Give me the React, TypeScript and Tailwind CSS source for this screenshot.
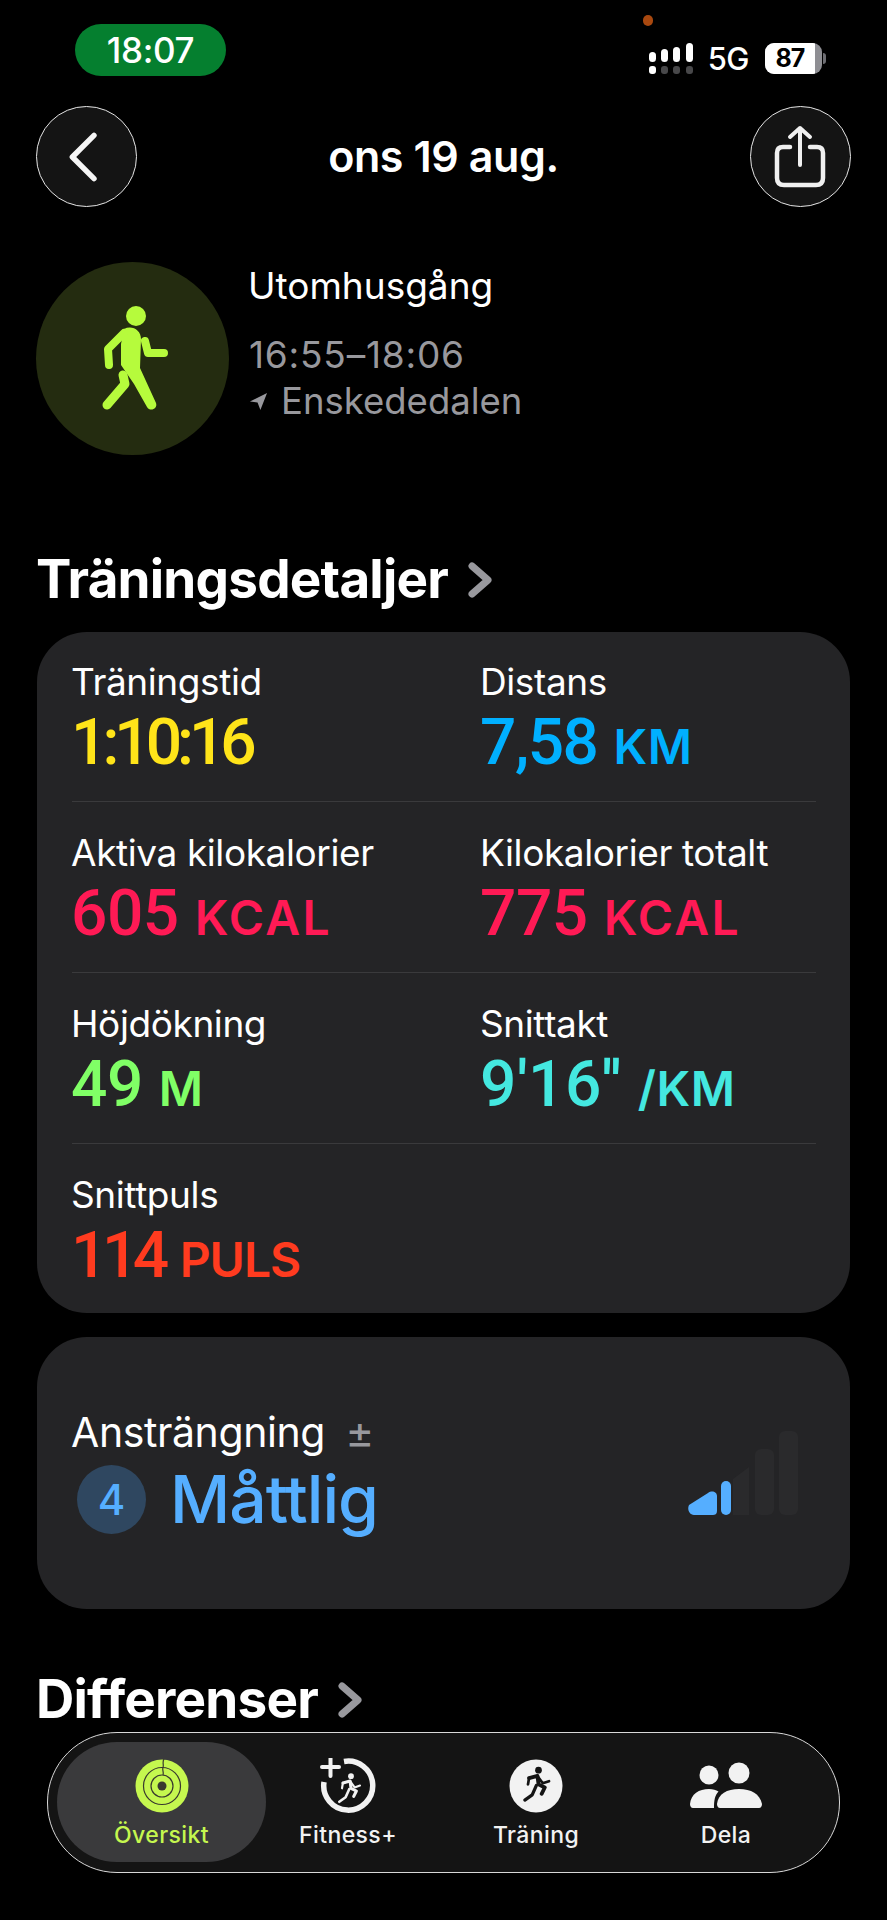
import React from 'react';

const GREEN = '#b6fb3c';

const WalkIcon = () => (
  <svg viewBox="0 0 193 193" className="w-full h-full" fill="none">
    <circle cx="100" cy="54" r="10" fill={GREEN} />
    <path d="M88 67 C96 63 105 68 105 77 L104 106 L120 141 C122 147 114 150 111 145 L98 122 L85 103 L85 82 Z" fill={GREEN} />
    <path d="M88 71 L72 87 L73 103" stroke={GREEN} strokeWidth="8" strokeLinecap="round" strokeLinejoin="round" />
    <path d="M109 79 L112 91 L128 91" stroke={GREEN} strokeWidth="8" strokeLinecap="round" strokeLinejoin="round" />
    <path d="M87 113 L89 122 L71 143" stroke={GREEN} strokeWidth="9" strokeLinecap="round" strokeLinejoin="round" />
  </svg>
);

const RunnerStrokes = ({ color, width = 3 }: { color: string; width?: number }) => (
  <>
    <circle cx="30" cy="13.5" r="3.2" fill={color} />
    <path d="M21 21 L29 19 L30 27 L36 30 L33 36" stroke={color} strokeWidth={width + 1} strokeLinecap="round" strokeLinejoin="round" fill="none" />
    <path d="M29 19 L34 26 L40 24" stroke={color} strokeWidth={width} strokeLinecap="round" strokeLinejoin="round" fill="none" />
    <path d="M21 21 L20 27" stroke={color} strokeWidth={width} strokeLinecap="round" fill="none" />
    <path d="M28 28 L24 37 L17 42" stroke={color} strokeWidth={width + 0.5} strokeLinecap="round" strokeLinejoin="round" fill="none" />
  </>
);

const RingsIcon = () => (
  <svg viewBox="0 0 54 54" className="w-[54px] h-[54px]" fill="none">
    <circle cx="27" cy="27" r="26.5" fill="#c5f74f" />
    <circle cx="27" cy="27" r="18.5" stroke="#38392f" strokeWidth="1.2" />
    <circle cx="27" cy="27" r="11" stroke="#38392f" strokeWidth="1.2" />
    <circle cx="27" cy="27" r="4.5" fill="#38392f" />
    <path d="M29 0 C27 3 29 6 28 8.5 C27 11 29 13 28 16" stroke="#38392f" strokeWidth="1.2" />
  </svg>
);

const FitnessIcon = () => (
  <svg viewBox="0 0 56 56" className="w-[56px] h-[56px]" fill="none">
    <path d="M24 3.5 A24.5 24.5 0 1 1 4 24" stroke="#f2f2f2" strokeWidth="5.5" />
    <path d="M10.5 0 V18 M2 9 H19" stroke="#f2f2f2" strokeWidth="4" strokeLinecap="round" />
    <g transform="translate(4 6) scale(0.9)">
      <RunnerStrokes color="#f2f2f2" width={2.4} />
    </g>
  </svg>
);

const TrainingIcon = () => (
  <svg viewBox="0 0 54 54" className="w-[54px] h-[54px]" fill="none">
    <circle cx="27" cy="27" r="26.5" fill="#f2f2f2" />
    <g transform="translate(-2 -3) scale(1.05)">
      <RunnerStrokes color="#141414" width={2.6} />
    </g>
  </svg>
);

const PeopleIcon = () => (
  <svg viewBox="0 0 72 48" className="w-[72px] h-[48px]" fill="#f2f2f2">
    <circle cx="19" cy="13" r="9.5" />
    <circle cx="49" cy="11" r="10.5" />
    <path d="M0 42 C1 32 9 27 19 27 C23 27 26 28 28.5 29.5 C 25 33 24 38 24 46 H3 C1 46 0 44 0 42 Z" />
    <path d="M27 42 C28 32 37 27 49 27 C61 27 70 32 72 42 C72 44 71 46 69 46 H30 C28 46 27 44 27 42 Z" />
  </svg>
);

const Chevron = () => (
  <svg viewBox="0 0 26 36" className="w-[26px] h-[36px]" fill="none">
    <path d="M5 4 L21 18 L5 32" stroke="#98989d" strokeWidth="7" strokeLinecap="round" strokeLinejoin="round" />
  </svg>
);

const SignalBars = () => {
  const heights = [10, 13, 15, 19];
  return (
    <div className="flex flex-col gap-[4px] w-[44px]">
      <div className="flex items-end justify-between h-[19px]">
        {heights.map((h, i) => (
          <span key={i} className="w-[7px] rounded-full bg-white" style={{ height: h }} />
        ))}
      </div>
      <div className="flex justify-between">
        <span className="w-[7px] h-[8px] rounded-[3px] bg-white" />
        <span className="w-[7px] h-[8px] rounded-[3px] bg-[#48484a]" />
        <span className="w-[7px] h-[8px] rounded-[3px] bg-[#48484a]" />
        <span className="w-[7px] h-[8px] rounded-[3px] bg-[#48484a]" />
      </div>
    </div>
  );
};

const Battery = () => (
  <div className="flex items-center">
    <div className="relative w-[57px] h-[31px] rounded-[9px] bg-[#8e8e93] overflow-hidden">
      <div className="h-full w-[50px] bg-white flex items-center justify-center">
        <span className="text-[25px] leading-none font-bold text-black tracking-[-1px]">87</span>
      </div>
    </div>
    <span className="ml-[1px] w-[3px] h-[11px] rounded-r-full bg-[#6e6e73]" />
  </div>
);

type Metric = { label: string; value: string; unit?: string; color: string; valueTrack?: string; unitTrack?: string };

const rows: Metric[][] = [
  [
    { label: 'Träningstid', value: '1:10:16', color: 'text-[#ffe419]', valueTrack: 'tracking-[-5px]' },
    { label: 'Distans', value: '7,58', unit: 'KM', color: 'text-[#00b0ff]', valueTrack: 'tracking-[-1.5px]' },
  ],
  [
    { label: 'Aktiva kilokalorier', value: '605', unit: 'KCAL', color: 'text-[#ff1a55]', unitTrack: 'tracking-[2.3px]' },
    { label: 'Kilokalorier totalt', value: '775', unit: 'KCAL', color: 'text-[#ff1a55]', unitTrack: 'tracking-[2.3px]' },
  ],
  [
    { label: 'Höjdökning', value: '49', unit: 'M', color: 'text-[#80ff66]' },
    { label: 'Snittakt', value: "9'16''", unit: '/KM', color: 'text-[#44e8e0]', valueTrack: 'tracking-[0.5px]' },
  ],
  [{ label: 'Snittpuls', value: '114', unit: 'PULS', color: 'text-[#ff3b1f]', valueTrack: 'tracking-[-5.5px]', unitTrack: 'tracking-[-1px]' }],
];

const MetricCell = ({ label, value, unit, color, valueTrack, unitTrack }: Metric) => (
  <div className="w-[409px] shrink-0">
    <div className="text-[37px] leading-[40px] text-white tracking-[-0.4px]">{label}</div>
    <div className={`mt-[7px] h-[68px] flex items-baseline text-[64px] leading-[68px] font-medium ${color}`} style={{ fontFamily: 'Roboto, Inter, sans-serif' }}>
      <span className={valueTrack ?? 'tracking-[-0.5px]'}>{value}</span>
      {unit && (
        <span className={`ml-[16px] text-[48px] font-semibold ${unitTrack ?? 'tracking-[0.5px]'}`} style={{ fontFamily: 'Inter, sans-serif' }}>
          {unit}
        </span>
      )}
    </div>
  </div>
);

const NavItem = ({ label, width, active, children }: { label: string; width: string; active?: boolean; children: React.ReactNode }) => (
  <div className={`${width} h-[120px] flex flex-col items-center ${active ? 'rounded-[60px] bg-[#3a3a3c]' : ''}`}>
    <div className="mt-[16px] h-[56px] flex items-center justify-center">{children}</div>
    <span className={`mt-[7px] text-[23px] leading-[28px] font-medium tracking-[0.4px] ${active ? 'text-[#c5f74f]' : 'text-[#f2f2f2]'}`}>{label}</span>
  </div>
);

export default function App() {
  return (
    <div className="relative w-[887px] h-[1920px] overflow-hidden bg-black text-white" style={{ fontFamily: 'Inter, sans-serif' }}>
      <span className="absolute left-[643px] top-[15px] w-[10px] h-[11px] rounded-full bg-[#a8480f]" />

      <div className="pt-[24px] pl-[75px] pr-[61px] flex items-start justify-between">
        <div className="w-[151px] h-[52px] rounded-[26px] bg-[#057f2f] flex items-center justify-center text-[35px] font-medium tracking-[-0.3px]">18:07</div>
        <div className="flex items-center mt-[19px]">
          <SignalBars />
          <span className="ml-[15px] text-[31px] leading-none font-medium tracking-[-0.5px]">5G</span>
          <div className="ml-[16px]"><Battery /></div>
        </div>
      </div>

      <div className="mt-[30px] px-[36px] flex items-center justify-between">
        <div className="w-[101px] h-[101px] rounded-full border-[1.5px] border-[#e5e5e5] bg-[#141414] flex items-center justify-center">
          <svg viewBox="0 0 40 60" className="w-[34px] h-[50px] -ml-[6px]" fill="none">
            <path d="M32 4 L6 30 L32 56" stroke="#f5f5f5" strokeWidth="6.5" strokeLinecap="round" strokeLinejoin="round" />
          </svg>
        </div>
        <span className="text-[43px] font-semibold tracking-[-0.4px]">ons 19 aug.</span>
        <div className="w-[101px] h-[101px] rounded-full border-[1.5px] border-[#e5e5e5] bg-[#141414] flex items-center justify-center">
          <svg viewBox="0 0 52 64" className="w-[52px] h-[64px]" fill="none" stroke="#f0f0f0" strokeLinecap="round" strokeLinejoin="round">
            <path d="M16 22 H9 C5 22 3 24 3 28 V53 C3 58 6 60 10 60 H42 C46 60 49 58 49 53 V28 C49 24 47 22 43 22 H36" strokeWidth="4.5" />
            <path d="M26 40 V3 M16 12 L26 3 L36 12" strokeWidth="4" />
          </svg>
        </div>
      </div>

      <div className="mt-[55px] px-[36px] flex items-start">
        <div className="w-[193px] h-[193px] rounded-full bg-[#242c10]"><WalkIcon /></div>
        <div className="ml-[20px]">
          <div className="text-[37px] leading-[47px] text-white -ml-[1px]">Utomhusgång</div>
          <div className="mt-[22px] text-[37px] leading-[47px] tracking-[0.8px] text-[#98989d]">16:55–18:06</div>
          <div className="flex items-center text-[36.5px] leading-[47px] text-[#98989d]">
            <svg viewBox="0 0 20 20" className="w-[19px] h-[19px] mr-[13px]" fill="#98989d">
              <path d="M19 1 L1 10 L9 11 L12 19 Z" />
            </svg>
            Enskededalen
          </div>
        </div>
      </div>

      <div className="mt-[96px] pl-[36px] flex items-center gap-[19px] h-[58px]">
        <span className="text-[53px] font-bold tracking-[-0.8px]">Träningsdetaljer</span>
        <Chevron />
      </div>

      <div className="mt-[23px] mx-[37px] w-[813px] h-[681px] rounded-[50px] bg-[#242426] px-[34px] pt-[30px]">
        {rows.map((row, i) => (
          <div key={i} className={i < rows.length - 1 ? 'h-[140px] border-b border-[#3a3a3c] mb-[31px] ml-[1px]' : 'ml-[1px]'}>
            <div className="flex -ml-[1px]">
              {row.map((m) => (
                <MetricCell key={m.label} {...m} />
              ))}
            </div>
          </div>
        ))}
      </div>

      <div className="mt-[24px] mx-[37px] w-[813px] h-[272px] rounded-[50px] bg-[#242426] pl-[34px] pr-[52px] pt-[71px] flex items-start justify-between">
        <div>
          <div className="flex items-center h-[48px]">
            <span className="text-[41px] leading-[48px] tracking-[-0.4px]">Ansträngning</span>
            <span className="ml-[20px] text-[44px] leading-none text-[#98989d]">±</span>
          </div>
          <div className="flex items-center h-[86px]">
            <div className="ml-[6px] w-[69px] h-[69px] rounded-full bg-[#2f4760] flex items-center justify-center text-[#55aeff] text-[42px] font-medium">4</div>
            <span className="ml-[24px] text-[66px] leading-[76px] font-medium tracking-[-1px] text-[#55aeff]">Måttlig</span>
          </div>
        </div>
        <svg viewBox="0 0 110 86" className="w-[110px] h-[86px] mt-[23px]" fill="none">
          <path d="M61 84 V36 L45 48 V84 Z" fill="#2a2a2c" />
          <rect x="67" y="18" width="19" height="66" rx="6" fill="#2a2a2c" />
          <rect x="91" y="0" width="19" height="84" rx="6" fill="#2a2a2c" />
          <path d="M1 74 L20 62 C24 59 29 61 29 65 V80 C29 83 27 84 25 84 H6 C1 84 -1 78 1 74 Z" fill="#55aeff" />
          <rect x="33" y="50" width="10" height="34" rx="5" fill="#55aeff" />
        </svg>
      </div>

      <div className="mt-[62px] pl-[36px] flex items-center gap-[19px] h-[58px]">
        <span className="text-[53px] font-bold tracking-[-0.8px]">Differenser</span>
        <Chevron />
      </div>

      <div className="absolute left-[47px] top-[1732px] w-[793px] h-[141px] rounded-[70px] border-[1.5px] border-[#d8d8d8] bg-[#141414] pl-[9px] pt-[9px] flex">
        <NavItem label="Översikt" width="w-[209px]" active><RingsIcon /></NavItem>
        <NavItem label="Fitness+" width="w-[164px]"><FitnessIcon /></NavItem>
        <NavItem label="Träning" width="w-[212px]"><TrainingIcon /></NavItem>
        <NavItem label="Dela" width="w-[168px]"><PeopleIcon /></NavItem>
      </div>
    </div>
  );
}
